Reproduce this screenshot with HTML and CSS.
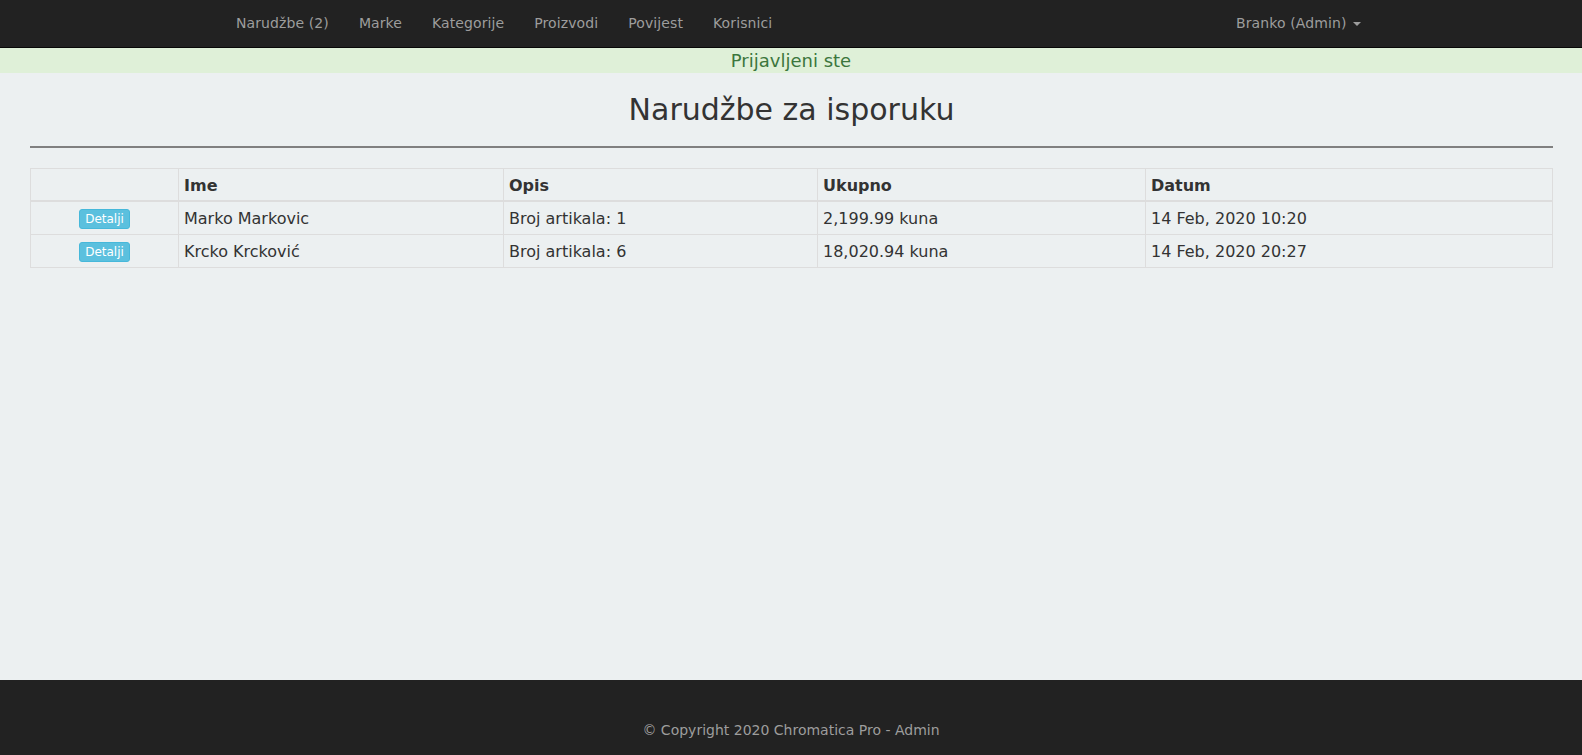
FILE: index.html
```html
<!DOCTYPE html>
<html lang="hr">
<head>
<meta charset="utf-8">
<title>Narudžbe za isporuku</title>
<link rel="stylesheet" href="styles.css">
</head>
<body>
<div class="page">
  <nav class="navbar">
    <div class="container nav-inner">
      <ul class="nav">
        <li><a href="#">Narudžbe (2)</a></li>
        <li><a href="#">Marke</a></li>
        <li><a href="#">Kategorije</a></li>
        <li><a href="#">Proizvodi</a></li>
        <li><a href="#">Povijest</a></li>
        <li><a href="#">Korisnici</a></li>
      </ul>
      <ul class="nav nav-right">
        <li><a href="#">Branko (Admin) <span class="caret"></span></a></li>
      </ul>
    </div>
  </nav>
  <div class="alert">Prijavljeni ste</div>
  <main class="main">
    <h2 class="title">Narudžbe za isporuku</h2>
    <hr class="rule">
    <table class="orders">
      <colgroup>
        <col class="c1"><col class="c2"><col class="c3"><col class="c4"><col class="c5">
      </colgroup>
      <thead>
        <tr><th></th><th>Ime</th><th>Opis</th><th>Ukupno</th><th>Datum</th></tr>
      </thead>
      <tbody>
        <tr>
          <td class="act"><a class="btn" href="#">Detalji</a></td>
          <td>Marko Markovic</td>
          <td>Broj artikala: 1</td>
          <td>2,199.99 kuna</td>
          <td>14 Feb, 2020 10:20</td>
        </tr>
        <tr>
          <td class="act"><a class="btn" href="#">Detalji</a></td>
          <td>Krcko Krcković</td>
          <td>Broj artikala: 6</td>
          <td>18,020.94 kuna</td>
          <td>14 Feb, 2020 20:27</td>
        </tr>
      </tbody>
    </table>
  </main>
  <footer class="footer">© Copyright 2020 Chromatica Pro - Admin</footer>
</div>
</body>
</html>
```

FILE: styles.css
```css
* { box-sizing: border-box; }
html, body { margin: 0; padding: 0; }
body {
  font-family: "DejaVu Sans", Verdana, sans-serif;
  font-size: 16px;
  color: #333;
  background: #ecf0f1;
}
.page {
  min-height: 755px;
  display: flex;
  flex-direction: column;
}
.navbar {
  background: #222;
  border-bottom: 1px solid #080808;
  height: 48px;
}
.container {
  width: 1170px;
  margin: 0 auto;
  padding: 0 15px;
}
.nav-inner {
  display: flex;
  justify-content: space-between;
  height: 47px;
}
.nav {
  list-style: none;
  margin: 0;
  padding: 0;
  display: flex;
}
.nav-right { margin-right: -15px; }
.nav a {
  display: block;
  padding: 13px 15px 14px;
  line-height: 20px;
  font-size: 14px;
  letter-spacing: 0.1px;
  color: #9d9d9d;
  text-decoration: none;
}
.caret {
  display: inline-block;
  width: 0;
  height: 0;
  margin-left: 2px;
  vertical-align: middle;
  border-top: 4px solid #9d9d9d;
  border-left: 4px solid transparent;
  border-right: 4px solid transparent;
}
.alert {
  background: #dff0d8;
  color: #3c763d;
  text-align: center;
  font-size: 18px;
  line-height: 25px;
  height: 25px;
}
.main {
  flex: 1;
  padding: 0 29px 0 30px;
}
.title {
  margin: 20px 0 0;
  font-size: 30px;
  font-weight: normal;
  line-height: 33px;
  text-align: center;
  color: #333;
}
.rule {
  margin: 20px 0 20px;
  border: 0;
  height: 2px;
  background: #808080;
}
.orders {
  width: 100%;
  border-collapse: collapse;
  table-layout: fixed;
}
.c1 { width: 148px; }
.c2 { width: 325px; }
.c3 { width: 314px; }
.c4 { width: 328px; }
.orders th, .orders td {
  border: 1px solid #ddd;
  padding: 6px 5px 4px;
  text-align: left;
  line-height: 22px;
  font-size: 16px;
}
.orders th {
  font-weight: bold;
  border-bottom: 2px solid #ddd;
  line-height: 21px;
}
.orders td.act { text-align: center; }
.btn {
  display: inline-block;
  background: #5bc0de;
  border: 1px solid #46b8da;
  color: #fff;
  font-size: 12px;
  line-height: 16px;
  padding: 1px 5px;
  border-radius: 3px;
  text-decoration: none;
  vertical-align: middle;
  position: relative;
  top: -1px;
}
.footer {
  background: #222;
  color: #9d9d9d;
  text-align: center;
  font-size: 14px;
  line-height: 20px;
  padding: 40px 0 15px;
  height: 75px;
}
```
